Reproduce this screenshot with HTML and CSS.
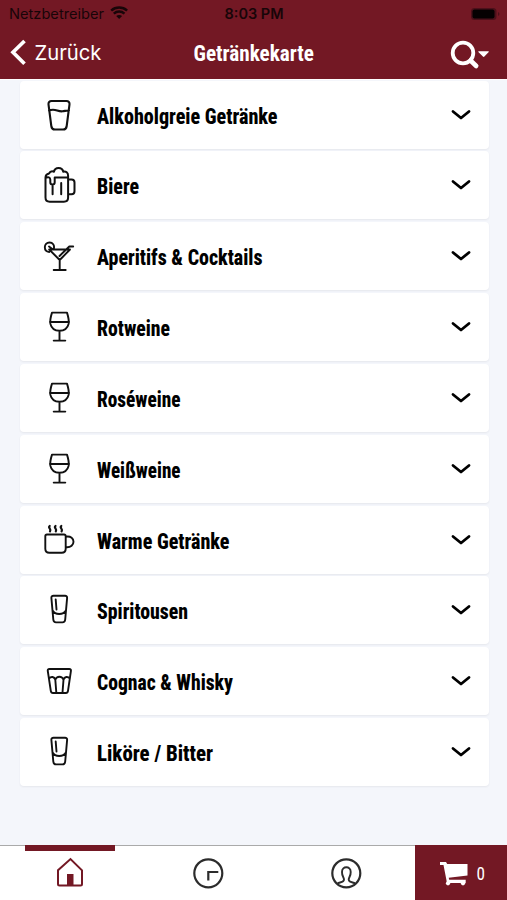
FILE: index.html
```html
<!DOCTYPE html>
<html lang="de">
<head>
<meta charset="utf-8">
<meta name="viewport" content="width=device-width">
<title>Getränkekarte</title>
<link rel="stylesheet" href="styles.css">
</head>
<body>
<svg width="0" height="0" class="defs" aria-hidden="true">
  <symbol id="wine" viewBox="0 0 38 38"><path d="M12 4.600h15c1.600 5 2.200 8 1.600 11.300-1 4.400-4.700 6.900-9.100 6.900s-8.100-2.500-9.100-6.900C9.800 12.600 10.400 9.600 12 4.600zM9.900 14h19.200M19.500 22.800v9.500M13.700 32.600h11.600"/></symbol>
  <symbol id="shot" viewBox="0 0 38 38"><path d="M13.500 4.700h11.500c1.500 0 2.300 1 2.100 2.400L25.200 28.500c-.2 1.900-1 2.900-2.700 2.900h-6.500c-1.700 0-2.500-1-2.700-2.900L11.400 7.100c-.2-1.400.6-2.400 2.100-2.400zM12.600 19.500c2.500 4.700 10.700 4.700 13.300 0M15.700 8.500l.8 10"/></symbol>
</svg>
<header class="header">
  <div class="status">
    <svg class="carrier" width="122" height="28"><text x="9" y="18.800" textLength="95" lengthAdjust="spacingAndGlyphs">Netzbetreiber</text><g fill="none" stroke="#180508" stroke-width="2.500"><path d="M111.200 10.600c4.600-4 11.300-4 15.900 0M113.800 13.600c3.100-2.700 7.600-2.700 10.700 0"/></g><path d="M116.200 16.100c1.800-1.400 4.100-1.400 5.900 0l-2.950 3z"/></svg>
    <svg class="clock" width="62" height="28"><text x="1.500" y="18.800" textLength="59" lengthAdjust="spacingAndGlyphs">8:03 PM</text></svg>
    <svg class="battery" width="32" height="14" viewBox="0 0 32 14"><rect x="1" y="1" width="25.500" height="12" rx="3.500" fill="#4c101a"/><rect x="2.500" y="2.500" width="22" height="9" rx="2" fill="#050102"/><path d="M28 5v4c2-1 2-3 0-4z" fill="#4c101a"/></svg>
  </div>
  <nav class="navbar">
    <svg class="back" width="110" height="50"><path d="M24.500 13 13 24.300l11.500 11.400" fill="none" stroke="#fff" stroke-width="3.700"/><text x="34.500" y="32.100" textLength="67" lengthAdjust="spacingAndGlyphs">Zurück</text></svg>
    <svg class="title" width="124" height="50"><text x="1.500" y="33.400" textLength="120.500" lengthAdjust="spacingAndGlyphs">Getränkekarte</text></svg>
    <svg class="search" width="42" height="50"><g fill="none" stroke="#fff"><circle cx="15" cy="25" r="10.300" stroke-width="3.800"/><path d="m22.500 32.500 5.700 5.500" stroke-width="4.600" stroke-linecap="round"/></g><path d="M31 23.200h9c.8 0 1 .6.500 1.100l-4.100 4.200c-.5.500-1 .5-1.500 0l-4.300-4.200c-.5-.5-.3-1.100.4-1.100z" fill="#fff"/></svg>
  </nav>
</header>
<main class="list">
  <section class="card"><svg class="icon" viewBox="0 0 38 38"><path d="M11.500 5h15c2 0 3.300 1.400 3 3.300L26.700 30c-.3 2.300-1.300 3.500-3.500 3.500h-8.400c-2.200 0-3.200-1.200-3.500-3.500L8.500 8.300C8.200 6.400 9.500 5 11.500 5zM9 14.600c6-2.700 8.500 1.300 13.500.7 2.500-.3 4.500-1 6.500-.8" stroke-width="2.100"/></svg><svg class="label"><text x="0" y="29" textLength="180.500" lengthAdjust="spacingAndGlyphs">Alkoholgreie Getränke</text></svg><svg class="chev" viewBox="0 0 22 14"><path d="m3 3.500 8 6.500 8-6.500"/></svg></section>
  <section class="card"><svg class="icon" viewBox="0 0 38 38"><path d="M9 7.500C10 5.500 12 5 14 5.700c.8-5 8.400-5 9.200 0 2.800-.7 4.900 1 4.900 4V31.500c0 2.700-1.500 4.200-4.200 4.200H9.700c-2.700 0-4.200-1.500-4.200-4.200V11.500c0-2.200 1.300-3.500 3.500-4zM5.500 12c2.700-1.500 4.800-.6 4.800 1.700v2.500c0 3 4.400 3 4.400 0V11.500h13.400M12.600 18.500v9.700M21.200 17v11.200M28.100 13.500h3.400c2 0 3 1 3 3v8.700c0 2-1 3-3 3h-3.400" stroke-width="2"/></svg><svg class="label"><text x="0" y="29" textLength="42" lengthAdjust="spacingAndGlyphs">Biere</text></svg><svg class="chev" viewBox="0 0 22 14"><path d="m3 3.500 8 6.500 8-6.500"/></svg></section>
  <section class="card"><svg class="icon" viewBox="0 0 38 38"><path d="M12.500 12.500h17.500L19.700 23 9.200 12.500zM13.800 12c1-4-1.200-6.500-4.300-6.500-6 0-6.300 9-.3 9.500M9 9.500l4 3M19.500 19l9.800-9.500h3.900M19.700 23v9.800M13.700 33h12"/></svg><svg class="label"><text x="0" y="29" textLength="165.500" lengthAdjust="spacingAndGlyphs">Aperitifs &amp; Cocktails</text></svg><svg class="chev" viewBox="0 0 22 14"><path d="m3 3.500 8 6.500 8-6.500"/></svg></section>
  <section class="card"><svg class="icon"><use href="#wine"/></svg><svg class="label"><text x="0" y="29" textLength="73" lengthAdjust="spacingAndGlyphs">Rotweine</text></svg><svg class="chev" viewBox="0 0 22 14"><path d="m3 3.500 8 6.500 8-6.500"/></svg></section>
  <section class="card"><svg class="icon"><use href="#wine"/></svg><svg class="label"><text x="0" y="29" textLength="83.500" lengthAdjust="spacingAndGlyphs">Roséweine</text></svg><svg class="chev" viewBox="0 0 22 14"><path d="m3 3.500 8 6.500 8-6.500"/></svg></section>
  <section class="card"><svg class="icon"><use href="#wine"/></svg><svg class="label"><text x="0" y="29" textLength="83.500" lengthAdjust="spacingAndGlyphs">Weißweine</text></svg><svg class="chev" viewBox="0 0 22 14"><path d="m3 3.500 8 6.500 8-6.500"/></svg></section>
  <section class="card"><svg class="icon" viewBox="0 0 38 38"><path d="M7 13.500h17c1.200 0 1.700.5 1.700 1.700v12.600c0 2.700-1.300 4-4 4H9.300c-2.700 0-4-1.300-4-4V15.200c0-1.200.5-1.700 1.700-1.700zM26 15.700c10-1.500 10 11.500 0 10.500"/><path d="M9.700 5c-2.200 1.800 2 2.700.3 5.300M15.500 5c-2.200 1.800 2 2.700.3 5.300M21.300 5c-2.200 1.800 2 2.700.3 5.300" stroke-width="2.200"/></svg><svg class="label"><text x="0" y="29" textLength="132.500" lengthAdjust="spacingAndGlyphs">Warme Getränke</text></svg><svg class="chev" viewBox="0 0 22 14"><path d="m3 3.500 8 6.500 8-6.500"/></svg></section>
  <section class="card"><svg class="icon"><use href="#shot"/></svg><svg class="label"><text x="0" y="29" textLength="91" lengthAdjust="spacingAndGlyphs">Spiritousen</text></svg><svg class="chev" viewBox="0 0 22 14"><path d="m3 3.500 8 6.500 8-6.500"/></svg></section>
  <section class="card"><svg class="icon" viewBox="0 0 38 38"><path d="M9.500 7h19.700c1.500 0 2 .8 1.700 2.200L28 28.800c-.2 1.500-.8 2.200-2.200 2.200H13c-1.400 0-2-.7-2.200-2.200L7.800 9.200C7.500 7.800 8 7 9.500 7zM9 16.500c2.200-2.400 5.300-2 6.300 1.200 1.500-4 6.700-4 8.200 0 1-3.200 4.200-3.600 6.400-1.200M15.300 17.700l1 12.800M23.500 17.700l-1 12.800"/></svg><svg class="label"><text x="0" y="29" textLength="136" lengthAdjust="spacingAndGlyphs">Cognac &amp; Whisky</text></svg><svg class="chev" viewBox="0 0 22 14"><path d="m3 3.500 8 6.500 8-6.500"/></svg></section>
  <section class="card"><svg class="icon"><use href="#shot"/></svg><svg class="label"><text x="0" y="29" textLength="116" lengthAdjust="spacingAndGlyphs">Liköre / Bitter</text></svg><svg class="chev" viewBox="0 0 22 14"><path d="m3 3.500 8 6.500 8-6.500"/></svg></section>
</main>
<footer class="tabs">
  <div class="tab active"><svg width="34" height="34" viewBox="0 0 34 34"><path d="M6.500 29.500h21c1 0 1.500-.5 1.500-1.500V14.300L17.500 3 5 14.300V28c0 1 .5 1.500 1.500 1.500z" fill="none" stroke="#731824" stroke-width="2"/><path d="M14 18h6.500v11.500H14z" fill="#731824"/></svg></div>
  <div class="tab"><svg width="34" height="34" viewBox="0 0 34 34"><g fill="none" stroke="#2c2c2c" stroke-width="2.200"><circle cx="17.300" cy="17.300" r="14"/><path d="M17.300 24.500V16h10"/></g></svg></div>
  <div class="tab"><svg width="34" height="34" viewBox="0 0 34 34"><g fill="none" stroke="#2c2c2c"><circle cx="17.300" cy="17.300" r="14" stroke-width="2.200"/><path d="M8.500 27.300c2.500-1.200 6.500-.8 6.500-3.800 0-2.200-2.200-3.500-2-7.500 0-6.300 8.700-6.300 8.700 0 .2 4-2 5.300-2 7.500 0 3 4 2.600 6.500 3.800" stroke-width="1.900"/></g></svg></div>
  <div class="cart"><svg width="92" height="55"><g fill="#fff"><path d="M25 17h6l1.200 2h20.300v11.500l-18.800 2.300.5 2h16.500v3.200H32L28.500 20H25z"/><circle cx="33" cy="38.300" r="2.100"/><circle cx="48" cy="38.300" r="2.100"/></g><text class="count" x="61.500" y="35" textLength="8.500" lengthAdjust="spacingAndGlyphs">0</text></svg></div>
</footer>
</body>
</html>
```
FILE: styles.css
```css
* { box-sizing: border-box; }
body {
  margin: 0;
  height: 900px;
  display: flex;
  flex-direction: column;
  overflow: hidden;
  background: #f4f6fb;
  font-family: Inter, "Liberation Sans", sans-serif;
}
svg { display: block; flex: none; overflow: visible; }
.defs { display: none; }
.header { height: 79px; flex: none; background: #731824; }
.status, .navbar {
  display: grid;
  grid-template-columns: 1fr auto 1fr;
}
.status { height: 28px; font-size: 14px; fill: #180508; }
.clock { font-weight: 600; }
.battery { justify-self: end; margin: 6.500px 5px 0 0; }
.navbar { height: 51px; fill: #fff; }
.back { font-size: 20.500px; }
.title {
  font-family: Roboto, sans-serif;
  font-size: 22.500px;
  font-weight: 700;
  font-stretch: 75%;
}
.search { justify-self: end; margin-right: 17px; }
.list {
  flex: 1;
  display: flex;
  flex-direction: column;
  gap: 2.850px;
  padding: 0.500px 18px 0 20px;
  border-top: 1px solid #fff;
}
.card {
  height: 68px;
  flex: none;
  display: flex;
  align-items: center;
  padding: 0 17px 0 20px;
  background: #fff;
  border-radius: 4px;
  box-shadow: 0 1px 2px rgba(40, 45, 50, .07);
}
.icon {
  width: 38px;
  height: 38px;
  fill: none;
  stroke: #111;
  stroke-width: 1.900;
  stroke-linecap: round;
  stroke-linejoin: round;
}
.label {
  flex: 1;
  height: 40px;
  margin-left: 18.500px;
  font-family: Roboto, sans-serif;
  font-size: 22px;
  font-weight: 800;
  font-stretch: 75%;
  fill: #000;
}
.chev {
  width: 22px;
  height: 14px;
  fill: none;
  stroke: #000;
  stroke-width: 2.800;
  stroke-linecap: round;
  stroke-linejoin: round;
}
.tabs {
  height: 55px;
  flex: none;
  display: grid;
  grid-template-columns: 139px 138px 138px 92px;
  background: #fff;
  border-top: 1px solid #aaa;
}
.tab { position: relative; display: flex; justify-content: center; padding-top: 10px; }
.active::before {
  content: "";
  position: absolute;
  top: -1px;
  left: 25px;
  width: 90px;
  height: 6px;
  background: #731824;
}
.cart { margin-top: -1px; background: #731824; }
.count {
  font-family: Roboto, sans-serif;
  font-size: 19px;
  font-stretch: 75%;
  fill: #fff;
}
```
